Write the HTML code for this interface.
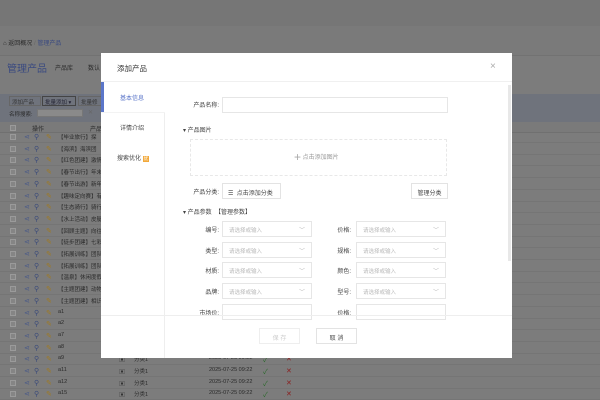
<!DOCTYPE html>
<html><head><meta charset="utf-8"><style>
*{margin:0;padding:0;box-sizing:border-box}
body{width:600px;height:400px;overflow:hidden;position:relative;background:#7c7c7c;font-family:"Liberation Sans","Noto Sans CJK SC",sans-serif;font-size:7px;color:#333}
.a{position:absolute}
.bg{color:#2a2a2a}
.row{position:absolute;left:0;width:600px;height:12px;border-bottom:1px solid #757575}
.cb{position:absolute;left:10px;top:3px;width:6px;height:6px;border:1px solid #9a9a9a;background:#858585}
.ic{position:absolute;top:2px;font-size:7px}
.m{position:absolute;left:101px;top:53px;width:411px;height:305px;background:#fff}
.lab{position:absolute;text-align:right;width:50px;color:#444;font-size:6px}
.in{position:absolute;height:16px;border:1px solid #e6e6e6;background:#fff;color:#bbb;font-size:5.5px;padding:4px 6px}
.in .ch{position:absolute;right:6px;top:3px;color:#bbb;font-size:6px}
.btn{position:absolute;border:1px solid #e3e3e3;background:#fff;text-align:center;font-size:6px;color:#444}
</style></head><body>
<div class="a" style="left:0;top:0;width:600px;height:26px;background:#767676"></div>
<div class="a" style="left:0;top:26px;width:600px;height:30px;background:#7a7a7a;border-bottom:1px solid #727272"></div>
<div class="a bg" style="left:3px;top:38px;font-size:6px">⌂ 返回概况 <span style="color:#666">/</span> <span style="color:#3a4a80">管理产品</span></div>
<div class="a" style="left:7px;top:60px;font-size:10px;color:#3a4a80">管理产品</div>
<div class="a bg" style="left:55px;top:63px;font-size:6px">产品库</div>
<div class="a bg" style="left:88px;top:63px;font-size:6px">数认</div>
<div class="a" style="left:0;top:94px;width:600px;height:28px;background:#6f737c"></div>
<div class="a" style="left:9px;top:96px;width:32px;height:10px;border:1px solid #666;font-size:5.5px;color:#333;padding:1px 2px">添加产品</div>
<div class="a" style="left:42px;top:96px;width:34px;height:10px;border:1px solid #444;font-size:5.5px;color:#223;padding:1px 2px">批量添加 ▾</div>
<div class="a" style="left:78px;top:96px;width:24px;height:10px;border:1px solid #666;font-size:5.5px;color:#333;padding:1px 2px">批量修</div>
<div class="a bg" style="left:9px;top:110px;font-size:5.5px">名称搜索:</div>
<div class="a" style="left:37px;top:109px;width:46px;height:8px;background:#8a8a8a;border:1px solid #777"></div>
<div class="a" style="left:88px;top:109px;font-size:6px;color:#666">✕</div>
<div class="a" style="left:0;top:122px;width:600px;height:11px;background:#7a7a7a;border-bottom:1px solid #707070"></div>
<div class="cb" style="top:125px"></div>
<div class="a bg" style="left:32px;top:124px;font-size:6px">操作</div>
<div class="a bg" style="left:90px;top:124px;font-size:6px">产品</div>
<div id="rows"></div>
<script>
var names=["【毕业旅行】探","【海滨】海滨团","【红色团建】激情","【春节出行】年末","【春节出游】新年","【趣味定向赛】有","【生态骑行】骑行","【水上活动】皮艇","【回顾主题】向往","【徒步团建】七彩","【拓展训练】团队","【拓展训练】团队","【温泉】休闲度假","【主题团建】动物","【主题团建】相识","a1","a2","a7","a8","a9","a11","a12","a15"];
var h="";
for(var i=0;i<names.length;i++){var t=131+i*11.7;
h+='<div class="row" style="top:'+t+'px"><div class="cb"></div><span class="ic" style="left:24px;color:#4a5a88">⋖</span><span class="ic" style="left:34px;color:#3a4a7a">⚲</span><span class="ic" style="left:46px;color:#a07a20">✎</span><span class="ic bg" style="left:58px;font-size:5.5px">'+names[i]+'</span>';
if(i>=19)h+='<span class="ic" style="left:119px;color:#333;font-size:6px">▣</span><span class="ic bg" style="left:134px;font-size:5.5px">分类1</span><span class="ic bg" style="left:209px;font-size:5.5px">2025-07-25 09:22</span><span class="ic" style="left:263px;color:#2a6a2a">✓</span><span class="ic" style="left:286px;color:#8a2020">✕</span>';
h+='</div>';}
document.getElementById('rows').innerHTML=h;
</script>
<div class="m">
<div class="a" style="left:0;top:0;width:411px;height:29px;border-bottom:1px solid #f0f0f0"></div>
<div class="a" style="left:16px;top:10px;font-size:7.5px;color:#333">添加产品</div>
<div class="a" style="left:389px;top:8px;font-size:10px;color:#aaa">×</div>
<div class="a" style="left:0;top:29px;width:3px;height:30px;background:#5b76c9"></div>
<div class="a" style="left:63px;top:59px;width:1px;height:246px;background:#eee"></div>
<div class="a" style="left:0;top:59px;width:64px;height:1px;background:#f3f3f3"></div>
<div class="a" style="left:19px;top:40px;font-size:6px;color:#5b76c9">基本信息</div>
<div class="a" style="left:19px;top:70px;font-size:6px;color:#444">详情介绍</div>
<div class="a" style="left:16px;top:100px;font-size:6px;color:#444">搜索优化 <span style="display:inline-block;background:#f2a93b;color:#fff;font-size:4.5px;padding:0 1px">优</span></div>
<div class="a" style="left:407px;top:32px;width:3px;height:176px;background:#e8e8e8"></div>
<div class="lab" style="left:68px;top:47px">产品名称:</div>
<div class="in" style="left:121px;top:44px;width:226px"></div>
<div class="a" style="left:82px;top:72px;font-size:6px;color:#444">▾ 产品图片</div>
<div class="a" style="left:89px;top:86px;width:257px;height:37px;border:1px dashed #e8e8e8"></div>
<div class="a" style="left:193px;top:97px;font-size:6px;color:#999"><span style="font-size:12px;vertical-align:-2px;color:#aaa">+</span> 点击添加图片</div>
<div class="lab" style="left:68px;top:134px">产品分类:</div>
<div class="btn" style="left:121px;top:130px;width:59px;height:16px;padding-top:4px;text-align:left;padding-left:5px">☰ &nbsp;点击添加分类</div>
<div class="btn" style="left:310px;top:130px;width:37px;height:16px;padding-top:4px">管理分类</div>
<div class="a" style="left:82px;top:154px;font-size:6px;color:#444">▾ 产品参数 &nbsp;【管理参数】</div>
<div id="params"></div>
<div class="a" style="left:0;top:262px;width:411px;height:1px;background:#eee"></div>
<div class="btn" style="left:158px;top:275px;width:41px;height:16px;padding-top:4px;color:#ccc;border-color:#eee">保 存</div>
<div class="btn" style="left:215px;top:275px;width:41px;height:16px;padding-top:4px">取 消</div>
</div>
<script>
var L=["编号","类型","材质","品牌","市场价"],R=["价格","规格","颜色","型号","价格"],p="";
for(var i=0;i<5;i++){var t=168+i*20.7;var last=i==4;
p+='<div class="lab" style="left:68px;top:'+(t+4)+'px">'+L[i]+':</div><div class="in" style="left:121px;top:'+t+'px;width:90px">'+(last?'':'请选择或输入<span class="ch">﹀</span>')+'</div>';
p+='<div class="lab" style="left:200px;top:'+(t+4)+'px">'+R[i]+':</div><div class="in" style="left:255px;top:'+t+'px;width:90px">'+(last?'':'请选择或输入<span class="ch">﹀</span>')+'</div>';}
document.getElementById('params').innerHTML=p;
</script>
</body></html>
